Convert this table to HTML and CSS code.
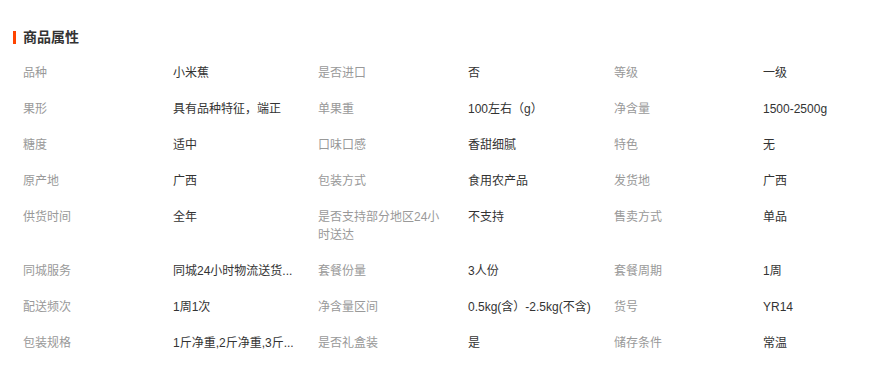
FILE: index.html
```html
<!DOCTYPE html>
<html lang="zh-CN">
<head>
<meta charset="utf-8">
<title>商品属性</title>
<link rel="stylesheet" href="styles.css">
</head>
<body>
<section class="attrs">
  <h2 class="attrs-title">商品属性</h2>
  <div class="attrs-grid">
    <div class="k">品种</div><div class="v">小米蕉</div>
    <div class="k">是否进口</div><div class="v">否</div>
    <div class="k">等级</div><div class="v">一级</div>

    <div class="k">果形</div><div class="v">具有品种特征，端正</div>
    <div class="k">单果重</div><div class="v">100左右（g）</div>
    <div class="k">净含量</div><div class="v">1500-2500g</div>

    <div class="k">糖度</div><div class="v">适中</div>
    <div class="k">口味口感</div><div class="v">香甜细腻</div>
    <div class="k">特色</div><div class="v">无</div>

    <div class="k">原产地</div><div class="v">广西</div>
    <div class="k">包装方式</div><div class="v">食用农产品</div>
    <div class="k">发货地</div><div class="v">广西</div>

    <div class="k">供货时间</div><div class="v">全年</div>
    <div class="k">是否支持部分地区24小时送达</div><div class="v">不支持</div>
    <div class="k">售卖方式</div><div class="v">单品</div>

    <div class="k">同城服务</div><div class="v">同城24小时物流送货...</div>
    <div class="k">套餐份量</div><div class="v">3人份</div>
    <div class="k">套餐周期</div><div class="v">1周</div>

    <div class="k">配送频次</div><div class="v">1周1次</div>
    <div class="k">净含量区间</div><div class="v">0.5kg(含）-2.5kg(不含)</div>
    <div class="k">货号</div><div class="v">YR14</div>

    <div class="k">包装规格</div><div class="v">1斤净重,2斤净重,3斤...</div>
    <div class="k">是否礼盒装</div><div class="v">是</div>
    <div class="k">储存条件</div><div class="v">常温</div>
  </div>
</section>
</body>
</html>
```

FILE: styles.css
```css
html, body {
  margin: 0;
  padding: 0;
  background: #fff;
}

body {
  font-family: "Liberation Sans", "Noto Sans CJK SC", sans-serif;
  font-size: 12px;
  color: #333;
}

.attrs {
  padding: 30px 0 0 13px;
}

.attrs-title {
  margin: 0;
  display: flex;
  align-items: center;
  height: 14px;
  font-size: 14px;
  line-height: 14px;
  font-weight: bold;
  color: #333;
}

.attrs-title::before {
  content: "";
  width: 3px;
  height: 13px;
  background: #ff4400;
  margin-right: 7px;
}

.attrs-grid {
  margin-top: 11px;
  padding-left: 10px;
  display: grid;
  grid-template-columns: 150px 145px 150px 146px 149px 1fr;
  align-items: start;
}

.k,
.v {
  padding: 9px 0;
  line-height: 18px;
}

.k {
  color: #999;
  max-width: 125px;
}

.v {
  color: #333;
  white-space: nowrap;
}
```
